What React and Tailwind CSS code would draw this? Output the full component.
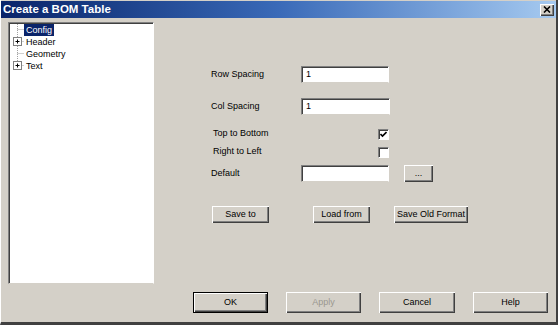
import React from "react";

const font = { fontFamily: '"Liberation Sans", Arial, sans-serif' };

// raised classic button, optional default (black outline)
function Btn({ label, className = "", disabled = false, isDefault = false }) {
    const frame = isDefault
        ? "border border-black shadow-[inset_1px_1px_0_#fff,inset_-1px_-1px_0_#404040,inset_-2px_-2px_0_#808080]"
        : "shadow-[inset_1px_1px_0_#fff,inset_-1px_-1px_0_#404040,inset_-2px_-2px_0_#808080]";
    return (
        <div className={`flex items-center justify-center bg-[#d4d0c8] text-[9px] ${frame} ${disabled ? "text-[#9a978f]" : "text-black"} ${className}`}>
            {label}
        </div>
    )
}

function Field({ value = "", className = "" }) {
    return (
        <div className={`flex items-center bg-white pl-[4px] text-[9px] text-black border border-t-[#808080] border-l-[#808080] border-r-white border-b-[#d4d0c8] shadow-[inset_1px_1px_0_#404040] ${className}`}>
            {value}
        </div>
    )
}

function Check({ checked }) {
    return (
        <div className="w-[11px] h-[11px] bg-white border border-t-[#808080] border-l-[#808080] border-r-white border-b-white shadow-[inset_1px_1px_0_#404040] flex items-center justify-center">
            {checked && (
                <svg width="7" height="7" viewBox="0 0 7 7">
                    <path d="M0.5 3 L2.5 5 L6.5 1" fill="none" stroke="#000" strokeWidth="1.6" />
                </svg>
            )}
        </div>
    )
}

function TreeGutter() {
    const rows = [5.5, 17.5, 29.5, 41.5];
    const plus = [17.5, 41.5];
    return (
        <svg width="13" height="48" viewBox="0 0 13 48" className="shrink-0">
            <line x1="6.5" y1="0" x2="6.5" y2="41.5" stroke="#a0a0a0" strokeDasharray="1 1" />
            {rows.map(y => (
                <line key={y} x1="6.5" y1={y} x2="13" y2={y} stroke="#a0a0a0" strokeDasharray="1 1" />
            ))}
            {plus.map(y => (
                <g key={y}>
                    <rect x="2.5" y={y - 4} width="8" height="8" fill="#fff" stroke="#808080" />
                    <line x1="4.5" y1={y} x2="8.5" y2={y} stroke="#000" />
                    <line x1="6.5" y1={y - 2} x2="6.5" y2={y + 2} stroke="#000" />
                </g>
            ))}
        </svg>
    )
}

export default function App() {
    return (
        <div style={font} className="w-[558px] h-[325px] bg-[#d4d0c8] flex flex-col border-l border-l-white border-r-2 border-r-[#404040] border-b-[3px] border-b-[#404040] pt-[1px] overflow-hidden">
            {/* title bar */}
            <div className="h-[17px] shrink-0 flex items-center justify-between pl-[2px] pr-[2px] bg-gradient-to-r from-[#0a246a] via-[#3a6ab8] to-[#a6caf0]">
                <span className="text-white font-bold text-[11.5px] leading-none">Create a BOM Table</span>
                <div className="w-[14px] h-[12px] bg-[#d4d0c8] flex items-center justify-center shadow-[inset_1px_1px_0_#fff,inset_-1px_-1px_0_#404040,inset_-2px_-2px_0_#808080]">
                    <svg width="8" height="7" viewBox="0 0 8 7">
                        <path d="M1 0.5 L7 6.5 M7 0.5 L1 6.5" stroke="#000" strokeWidth="1.6" />
                    </svg>
                </div>
            </div>

            <div className="flex flex-1">
                {/* tree panel */}
                <div className="ml-[7px] mt-[4px] w-[146px] h-[262px] bg-white border border-t-[#808080] border-l-[#808080] border-r-white border-b-[#d4d0c8] shadow-[inset_1px_1px_0_#404040] pl-[2px] pt-[1px]">
                    <div className="flex">
                        <TreeGutter />
                        <div className="flex flex-col text-[9px] leading-[12px]">
                            <span className="self-start bg-[#0a246a] text-white px-[2px]">Config</span>
                            <span className="px-[2px] text-black">Header</span>
                            <span className="px-[2px] text-black">Geometry</span>
                            <span className="px-[2px] text-black">Text</span>
                        </div>
                    </div>
                </div>

                {/* config form */}
                <div className="flex flex-col pl-[57px] pt-[48px] text-[9px] text-black">
                    <div className="flex items-center h-[17px]">
                        <span className="w-[90px]">Row Spacing</span>
                        <Field value="1" className="w-[88px] h-[17px]" />
                    </div>
                    <div className="flex items-center h-[17px] mt-[15px]">
                        <span className="w-[90px]">Col Spacing</span>
                        <Field value="1" className="w-[89px] h-[17px]" />
                    </div>
                    <div className="flex items-center h-[12px] mt-[13px]">
                        <span className="w-[167px] pl-[2px]">Top to Bottom</span>
                        <Check checked />
                    </div>
                    <div className="flex items-center h-[12px] mt-[6px]">
                        <span className="w-[167px] pl-[2px]">Right to Left</span>
                        <Check />
                    </div>
                    <div className="flex items-center h-[17px] mt-[7px]">
                        <span className="w-[90px]">Default</span>
                        <Field className="w-[88px] h-[17px]" />
                        <Btn label="..." className="ml-[15px] w-[29px] h-[17px]" />
                    </div>
                    <div className="flex items-center mt-[24px] pl-[1px]">
                        <Btn label="Save to" className="w-[57px] h-[17px]" />
                        <Btn label="Load from" className="ml-[44px] w-[57px] h-[17px]" />
                        <Btn label="Save Old Format" className="ml-[24px] w-[74px] h-[17px]" />
                    </div>
                </div>
            </div>

            {/* dialog buttons */}
            <div className="flex shrink-0 gap-[18px] pl-[192px] pb-[9px]">
                <Btn label="OK" isDefault className="w-[75px] h-[21px]" />
                <Btn label="Apply" disabled className="w-[75px] h-[21px]" />
                <Btn label="Cancel" className="w-[76px] h-[21px]" />
                <Btn label="Help" className="w-[75px] h-[21px]" />
            </div>
        </div>
    )
}
